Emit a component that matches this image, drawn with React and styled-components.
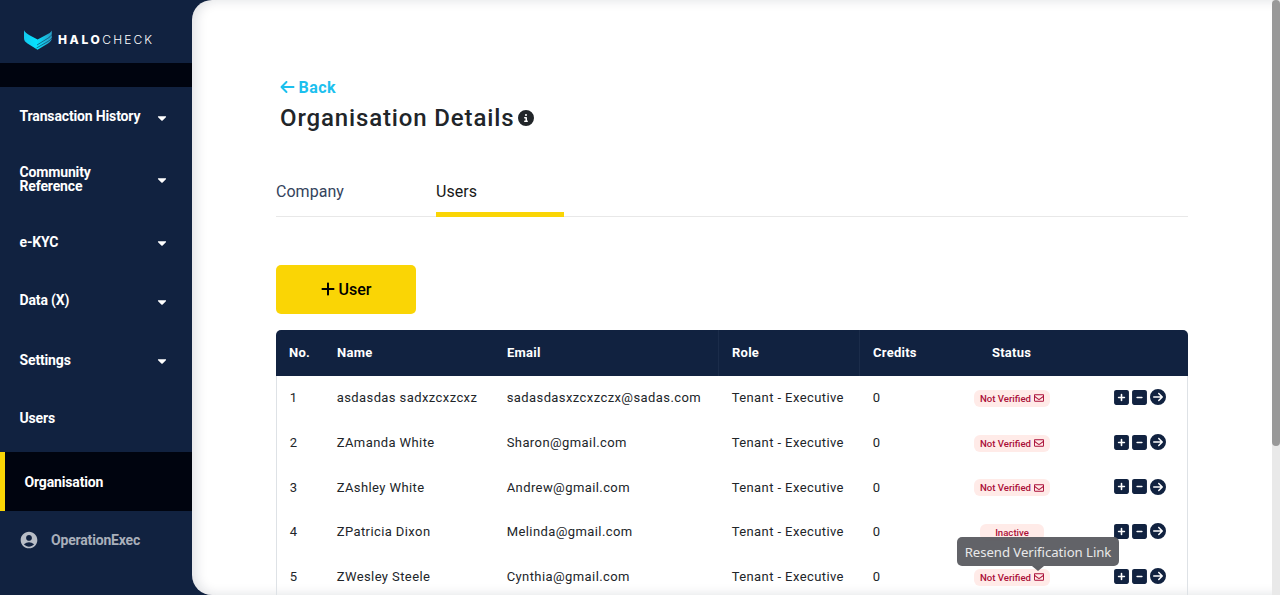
import React from "react";
import styled, { createGlobalStyle, css } from "styled-components";
import { FaCaretDown, FaRegEnvelope } from "react-icons/fa";
import {
  FaArrowLeft,
  FaCircleArrowRight,
  FaCircleInfo,
  FaPlus,
  FaSquareMinus,
  FaSquarePlus,
} from "react-icons/fa6";
import { MdAccountCircle } from "react-icons/md";

const navy = "#112240";
const ink = "#212529";
const yellow = "#fad505";

const Global = createGlobalStyle`
  *, *::before, *::after { box-sizing: border-box; }
  body {
    margin: 0;
    height: 595px;
    overflow: hidden;
    background: ${navy};
    font-family: Roboto, "Liberation Sans", sans-serif;
    color: ${ink};
  }
`;

const Page = styled.div`
  display: flex;
  height: 595px;
  width: 1280px;
  overflow: hidden;
`;

const Sidebar = styled.nav`
  flex: 0 0 192px;
  display: flex;
  flex-direction: column;
`;

const Brand = styled.div`
  height: 63px;
  padding: 30px 0 0 24px;
  display: flex;
  align-items: flex-start;
`;

const LogoMark = styled.svg`
  width: 28px;
  height: 20px;
`;

const Wordmark = styled.span`
  margin: 1px 0 0 6px;
  font: 300 12px/18px Inter, sans-serif;
  letter-spacing: 2.1px;
  color: #fff;
  white-space: nowrap;
  b { font-weight: 800; letter-spacing: 2.6px; }
`;

const Strip = styled.div`
  height: 24px;
  background: #00040f;
`;

const NavItem = styled.div`
  height: ${(p) => p.$h}px;
  display: flex;
  align-items: center;
  justify-content: space-between;
  padding: 0 24px 0 19.5px;
  font-size: 14px;
  line-height: 14px;
  font-weight: 700;
  letter-spacing: -0.15px;
  color: #fff;
  ${(p) =>
    p.$active &&
    css`
      margin-top: 6px;
      background: #00040f;
      border-left: 5px solid ${yellow};
    `}
`;

const NavLabel = styled.span`
  max-width: 125px;
  white-space: pre-line;
`;

const Caret = styled(FaCaretDown)`
  width: 12px;
  height: 14px;
  margin-top: ${(p) => p.$drop}px;
`;

const Account = styled.div`
  display: flex;
  align-items: center;
  height: 58px;
  padding-left: 19px;
  gap: 12px;
  font-size: 14px;
  font-weight: 700;
  letter-spacing: -0.18px;
  color: #a9afba;
  svg { width: 20px; height: 20px; color: #b8bdc6; }
`;

const Main = styled.main`
  flex: 1;
  display: flex;
  justify-content: space-between;
  background: #fff;
  border-radius: 20px 0 0 20px;
  box-shadow: inset 4px 0 12px rgba(17, 24, 50, 0.13);
  overflow: hidden;
`;

const Content = styled.div`
  width: 912px;
  margin-left: 84px;
  padding-top: 77px;
`;

const BackLink = styled.a`
  display: flex;
  align-items: center;
  gap: 4px;
  margin-left: 3.5px;
  height: 20px;
  font-size: 16px;
  font-weight: 700;
  letter-spacing: 0.5px;
  color: #1cc0ee;
  svg { width: 15px; height: 16px; }
`;

const Title = styled.h1`
  display: flex;
  align-items: center;
  gap: 4px;
  margin: 5px 0 0 4px;
  height: 32px;
  font-size: 24px;
  font-weight: 500;
  letter-spacing: 0.86px;
  svg { width: 16px; height: 16px; }
`;

const Tabs = styled.div`
  display: flex;
  gap: 32px;
  height: 37px;
  margin-top: 46px;
  border-bottom: 1px solid #e8e8e8;
`;

const Tab = styled.div`
  width: 128px;
  height: 37px;
  padding-top: 2px;
  font-size: 16px;
  line-height: 19px;
  letter-spacing: 0.03px;
  color: ${(p) => (p.$active ? "#181818" : "#34435c")};
  border-bottom: ${(p) => (p.$active ? `5px solid ${yellow}` : "0")};
`;

const AddButton = styled.button`
  display: flex;
  align-items: center;
  justify-content: center;
  gap: 4px;
  width: 140px;
  height: 49px;
  margin: 48px 0 16px;
  padding: 0 0 1px;
  border: 0;
  border-radius: 5px;
  background: ${yellow};
  color: #000;
  font: 500 16px Roboto, sans-serif;
  svg { width: 14px; height: 16px; }
`;

const HeadRow = styled.div`
  display: grid;
  grid-template-columns: 48px 170px 225px 141px 94px 116px 1fr;
  height: 46px;
  background: ${navy};
  border-radius: 5px 5px 0 0;
  color: #fff;
`;

const HeadCell = styled.div`
  display: flex;
  align-items: center;
  justify-content: ${(p) => (p.$center ? "center" : "flex-start")};
  padding: 0 0 1px ${(p) => (p.$center ? 0 : 13)}px;
  font-size: 13px;
  font-weight: 700;
  letter-spacing: 0.25px;
  border-right: 1px solid ${(p) => (p.$line ? "#1b2c4a" : "transparent")};
`;

const Body = styled.div`
  border: solid #dee2e6;
  border-width: 0 1px;
`;

const Row = styled.div`
  display: grid;
  grid-template-columns: 47px 170px 225px 141px 94px 116px 1fr;
  height: 44.7px;
  align-items: center;
  font-size: 13px;
  letter-spacing: 0.41px;
  color: ${ink};
`;

const Cell = styled.div`
  padding-left: 12.7px;
  padding-bottom: 1px;
  white-space: nowrap;
`;

const StatusCell = styled.div`
  display: flex;
  justify-content: center;
`;

const Badge = styled.span`
  position: relative;
  display: flex;
  align-items: center;
  justify-content: center;
  gap: 3px;
  width: ${(p) => (p.$wide ? 76 : 64)}px;
  height: 17px;
  border-radius: 6px;
  background: #ffebe8;
  color: #ab0f38;
  font-size: 9.6px;
  font-weight: 500;
  white-space: nowrap;
  letter-spacing: 0;
  svg { width: 10px; height: 10px; }
`;

const Actions = styled.div`
  display: flex;
  align-items: center;
  justify-content: flex-end;
  gap: 3px;
  padding: 0 21.5px 2px 0;
  color: ${navy};
  svg { width: 15px; height: 17px; }
  svg:last-child { width: 16px; height: 16px; }
`;

const Tooltip = styled.span`
  position: absolute;
  left: -17px;
  bottom: 20px;
  width: 162px;
  height: 29px;
  border-radius: 5px;
  background: rgba(90, 91, 96, 0.95);
  color: #e9e9ea;
  font: 400 13.2px/31px "Noto Sans", sans-serif;
  letter-spacing: -0.05px;
  text-align: center;
  z-index: 2;
  &::after {
    content: "";
    position: absolute;
    left: 75px;
    top: 29px;
    border: 6px solid transparent;
    border-top: 5px solid #5f6065;
    border-bottom: 0;
  }
`;

const ScrollTrack = styled.div`
  width: 8px;
  background: #e9e9e9;
`;

const ScrollThumb = styled.div`
  height: 446px;
  border-radius: 4px;
  background: #999;
`;

const nav = [
  { label: "Transaction History", h: 58, drop: 4 },
  { label: "Community\nReference", h: 68, drop: 2 },
  { label: "e-KYC", h: 58, drop: 1 },
  { label: "Data (X)", h: 58, drop: 4 },
  { label: "Settings", h: 61, drop: 2 },
  { label: "Users", h: 56 },
  { label: "Organisation", h: 59, active: true },
];

const users = [
  ["asdasdas sadxzcxzcxz", "sadasdasxzcxzczx@sadas.com"],
  ["ZAmanda White", "Sharon@gmail.com"],
  ["ZAshley White", "Andrew@gmail.com"],
  ["ZPatricia Dixon", "Melinda@gmail.com", "Inactive"],
  ["ZWesley Steele", "Cynthia@gmail.com", "Not Verified", true],
];

function Logo() {
  return (
    <LogoMark viewBox="0 0 28 20">
      <defs>
        <linearGradient id="wing" x1="0" y1="0" x2="28" y2="0" gradientUnits="userSpaceOnUse">
          <stop offset="0" stopColor="#14c8ee" />
          <stop offset="0.45" stopColor="#04e2ff" />
          <stop offset="1" stopColor="#2a9cc4" />
        </linearGradient>
      </defs>
      <path
        d="M0 .3C1 2.500 3 3.800 6 5.400L13.600 9.600L21.500 5.200C25 3.500 27 2.300 27.800.5V8C27.700 10.500 26.500 12 24 13.400L13.500 19.700L3.500 13.500C1.200 12 0 10.500 0 8Z"
        fill="url(#wing)"
      />
      <path
        d="M13 15L23.500 8.500C25.500 7.300 27 6 27.800 4.500M12.500 18L24.200 11.300C26 10.200 27.200 9.200 27.800 8"
        fill="none"
        stroke={navy}
        strokeWidth=".8"
        opacity=".7"
      />
    </LogoMark>
  );
}

export default function App() {
  return (
    <Page>
      <Global />
      <Sidebar>
        <Brand>
          <Logo />
          <Wordmark><b>HALO</b>CHECK</Wordmark>
        </Brand>
        <Strip />
        {nav.map((n) => (
          <NavItem key={n.label} $h={n.h} $active={n.active}>
            <NavLabel>{n.label}</NavLabel>
            {n.drop && <Caret $drop={n.drop} />}
          </NavItem>
        ))}
        <Account><MdAccountCircle />OperationExec</Account>
      </Sidebar>
      <Main>
        <Content>
          <BackLink><FaArrowLeft />Back</BackLink>
          <Title>Organisation Details<FaCircleInfo /></Title>
          <Tabs>
            <Tab>Company</Tab>
            <Tab $active>Users</Tab>
          </Tabs>
          <AddButton><FaPlus />User</AddButton>
          <HeadRow>
            <HeadCell>No.</HeadCell>
            <HeadCell>Name</HeadCell>
            <HeadCell $line>Email</HeadCell>
            <HeadCell $line>Role</HeadCell>
            <HeadCell>Credits</HeadCell>
            <HeadCell $center>Status</HeadCell>
            <HeadCell />
          </HeadRow>
          <Body>
            {users.map(([name, email, status = "Not Verified", tip], i) => (
              <Row key={name}>
                <Cell>{i + 1}</Cell>
                <Cell>{name}</Cell>
                <Cell>{email}</Cell>
                <Cell>Tenant - Executive</Cell>
                <Cell>0</Cell>
                <StatusCell>
                  <Badge $wide={status === "Not Verified"}>
                    {status}
                    {status === "Not Verified" && <FaRegEnvelope />}
                    {tip && <Tooltip>Resend Verification Link</Tooltip>}
                  </Badge>
                </StatusCell>
                <Actions><FaSquarePlus /><FaSquareMinus /><FaCircleArrowRight /></Actions>
              </Row>
            ))}
          </Body>
        </Content>
        <ScrollTrack><ScrollThumb /></ScrollTrack>
      </Main>
    </Page>
  );
}
